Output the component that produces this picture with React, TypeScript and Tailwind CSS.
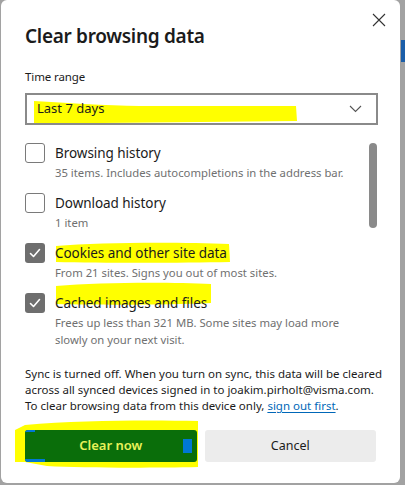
import React from "react";

const font = { fontFamily: '"Segoe UI", "Noto Sans", "Open Sans", sans-serif' };

function Checkbox({ checked }: { checked: boolean }) {
  if (checked) {
    return (
      <div className="w-[20px] h-[20px] rounded-[3px] bg-[#6e6e6e] flex items-center justify-center shrink-0">
        <svg width="14" height="14" viewBox="0 0 14 14" fill="none">
          <path d="M2.5 7.5 L5.5 10.5 L11.5 3.5" stroke="white" strokeWidth="1.6" strokeLinecap="round" strokeLinejoin="round" />
        </svg>
      </div>
    );
  }
  return <div className="w-[20px] h-[20px] rounded-[3px] border border-[#7a7a7a] bg-white shrink-0" />;
}

function Item({ checked, title, desc }: { checked: boolean; title: string; desc: React.ReactNode }) {
  return (
    <div className="flex gap-[10px]">
      <Checkbox checked={checked} />
      <div className="flex flex-col">
        <div className="text-[13.5px] leading-[20px] tracking-[-0.05px] text-[#1b1b1b]">{title}</div>
        <div className="text-[11.3px] leading-[17px] text-[#707070] mt-[1px] whitespace-nowrap">{desc}</div>
      </div>
    </div>
  );
}

export default function App() {
  return (
    <div className="w-[405px] h-[485px] bg-[#a2a2a2] relative overflow-hidden" style={font}>
      <div className="absolute right-0 top-[40px] w-[4px] h-[22px] bg-[#1b5ea8]" />
      <div className="absolute left-0 top-0 ml-[1px] w-[399px] h-[483px] bg-white rounded-[6px]">
        {/* highlighter marks */}
        <svg className="absolute left-0 top-0" width="399" height="483" viewBox="0 0 399 483">
          <path d="M33 101 C80 104 120 106 150 106 L295 106 L296 121 L200 122 L100 123 L33 124 Z" fill="#ffff00" />
          <path d="M55 246 C100 242 180 242 228 244 L229 262 C180 263 100 263 55 262 Z" fill="#ffff00" />
          <path d="M55 286 C100 282 170 282 210 284 L210 303 C170 305 100 305 55 304 Z" fill="#ffff00" />
          <path d="M24 425 C80 420 150 420 197 421 L197 467 C150 468 80 468 46 466 L24 462 L14 462 L14 430 Z" fill="#ffff00" />
        </svg>

        <button className="absolute right-[13px] top-[12px] w-[16px] h-[16px] flex items-center justify-center">
          <svg width="14" height="14" viewBox="0 0 14 14">
            <path d="M1 1 L13 13 M13 1 L1 13" stroke="#333" strokeWidth="1.1" />
          </svg>
        </button>

        <div className="relative px-[24px] pt-[20px] flex flex-col">
          <h1 className="text-[19px] leading-[32px] tracking-[-0.3px] font-semibold text-[#1b1b1b]">Clear browsing data</h1>
          <div className="mt-[16px] text-[11.5px] leading-[18px] tracking-[-0.1px] text-[#1b1b1b]">Time range</div>
          <div className="mt-[7px] h-[32px] w-[353px] border-2 border-[#8a8a8a] flex items-center justify-between pl-[10px] pr-[14px]">
            <span className="text-[13px] text-[#1b1b1b]">Last 7 days</span>
            <svg width="13" height="8" viewBox="0 0 13 8" fill="none">
              <path d="M1 1 L6.5 6.5 L12 1" stroke="#555" strokeWidth="1.1" />
            </svg>
          </div>

          <div className="mt-[18px] flex">
            <div className="flex flex-col gap-[12px] flex-1">
              <Item checked={false} title="Browsing history" desc="35 items. Includes autocompletions in the address bar." />
              <Item checked={false} title="Download history" desc="1 item" />
              <Item checked={true} title="Cookies and other site data" desc="From 21 sites. Signs you out of most sites." />
              <Item
                checked={true}
                title="Cached images and files"
                desc={
                  <>
                    Frees up less than 321 MB. Some sites may load more
                    <br />
                    slowly on your next visit.
                  </>
                }
              />
            </div>
            <div className="w-[8px] h-[85px] rounded-full bg-[#8a8a8a] mr-[-1px]" />
          </div>

          <p className="mt-[18px] text-[11.5px] leading-[16px] text-[#1b1b1b] whitespace-nowrap">
            Sync is turned off. When you turn on sync, this data will be cleared
            <br />
            across all synced devices signed in to joakim.pirholt@visma.com.
            <br />
            To clear browsing data from this device only,{" "}
            <a className="text-[#0067b8] underline underline-offset-2">sign out first</a>.
          </p>

          <div className="mt-[16px] flex gap-[8px]">
            <div className="relative w-[172px] h-[32px] rounded-[3px] bg-[#0a6e0a] flex items-center justify-center overflow-hidden">
              <div className="absolute left-0 bottom-0 w-[20px] h-[3px] bg-[#0078d4]" />
              <div className="absolute left-0 top-0 w-[10px] h-[2px] bg-[#0078d4]" />
              <div className="absolute right-[5px] top-[9px] w-[9px] h-[14px] bg-[#0078d4]" />
              <span className="relative text-[13px] font-semibold text-[#e9f25a]">Clear now</span>
            </div>
            <div className="w-[172px] h-[32px] rounded-[3px] bg-[#ececec] flex items-center justify-center">
              <span className="text-[12.5px] text-[#1b1b1b]">Cancel</span>
            </div>
          </div>
        </div>
      </div>
    </div>
  );
}
